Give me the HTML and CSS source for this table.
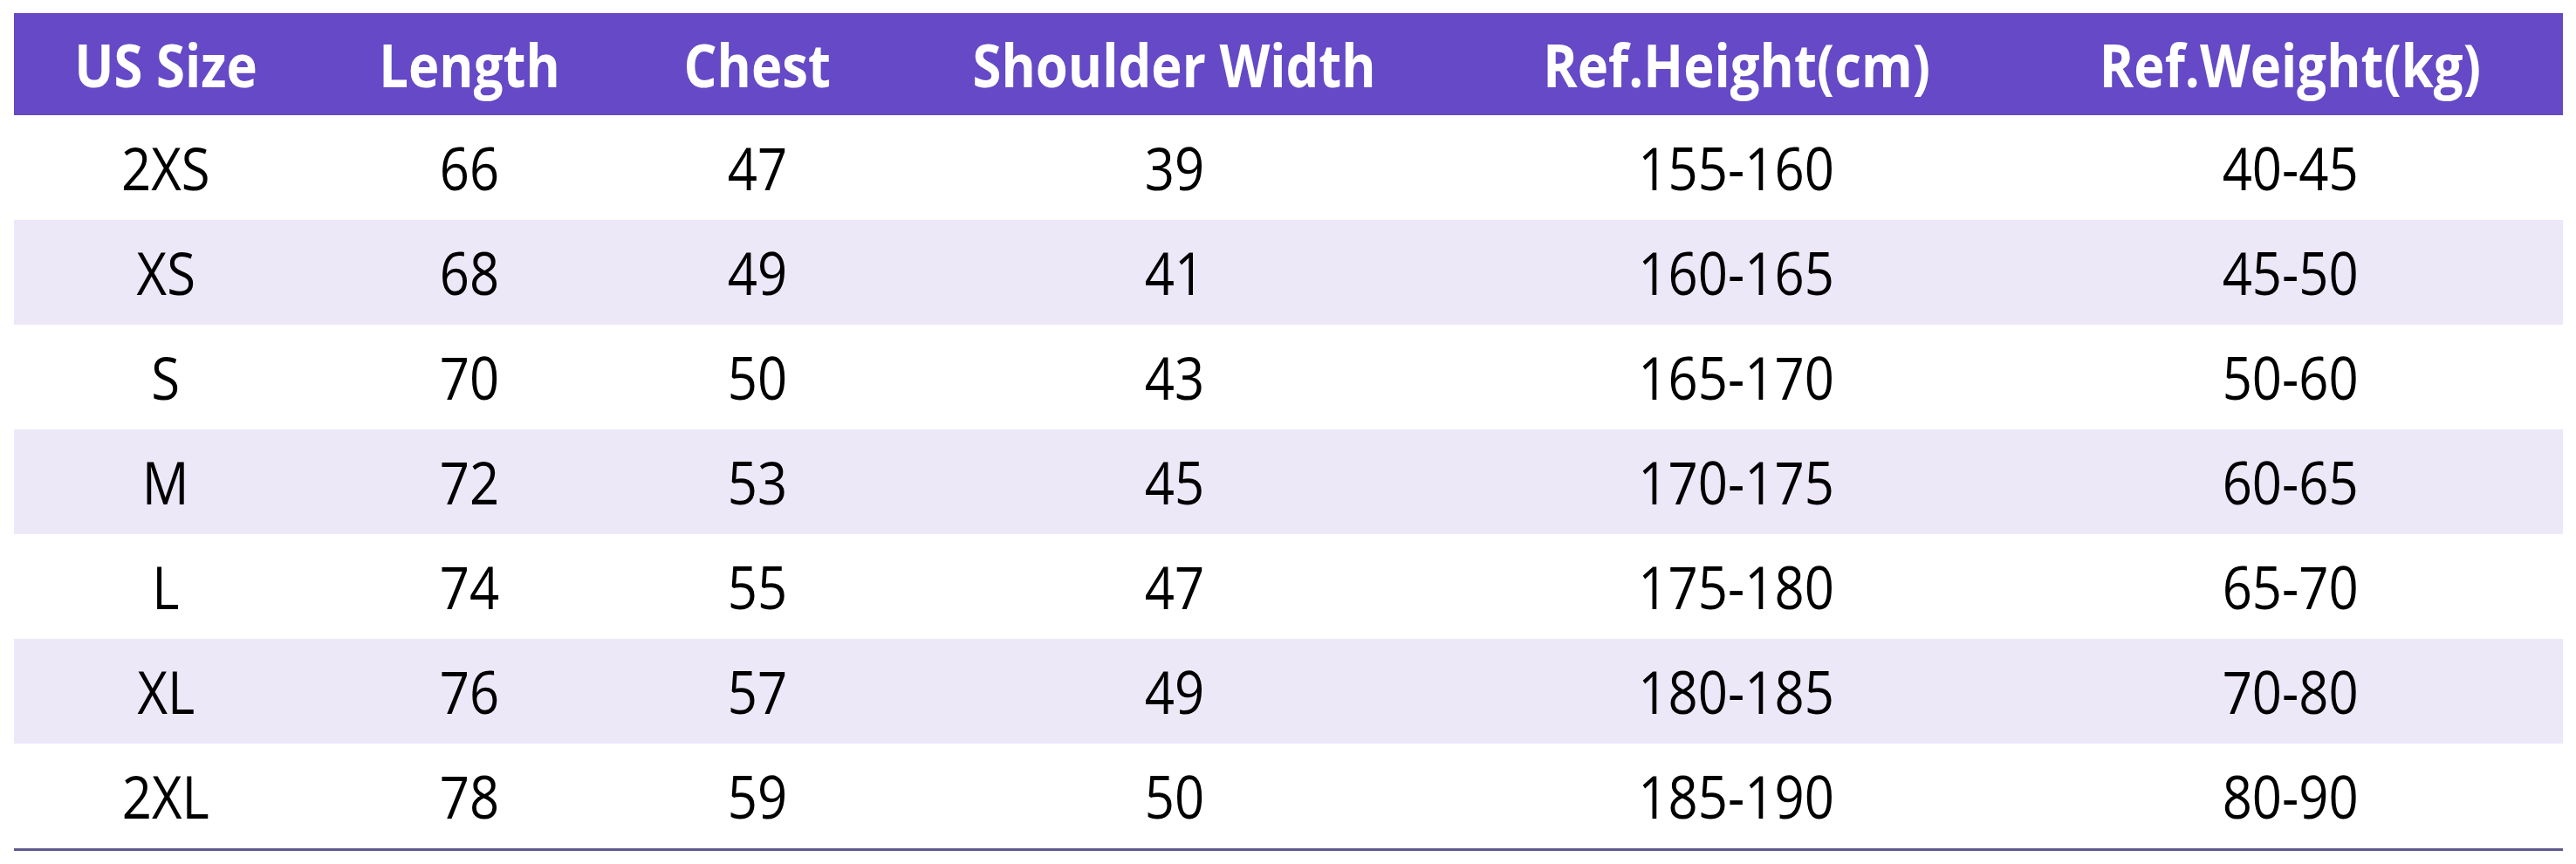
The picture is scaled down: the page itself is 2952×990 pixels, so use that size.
FILE: index.html
```html
<!DOCTYPE html>
<html lang="en">
<head>
<meta charset="utf-8">
<title>Size Chart</title>
<link rel="stylesheet" href="styles.css">
</head>
<body>
<table class="size-table">
  <colgroup>
    <col class="c1"><col class="c2"><col class="c3"><col class="c4"><col class="c5"><col class="c6">
  </colgroup>
  <thead>
    <tr>
      <th><span class="t">US Size</span></th>
      <th><span class="t">Length</span></th>
      <th><span class="t">Chest</span></th>
      <th><span class="t">Shoulder Width</span></th>
      <th><span class="t">Ref.Height(cm)</span></th>
      <th><span class="t">Ref.Weight(kg)</span></th>
    </tr>
  </thead>
  <tbody>
    <tr><td><span class="t">2XS</span></td><td><span class="t">66</span></td><td><span class="t">47</span></td><td><span class="t">39</span></td><td><span class="t">155-160</span></td><td><span class="t">40-45</span></td></tr>
    <tr class="alt"><td><span class="t">XS</span></td><td><span class="t">68</span></td><td><span class="t">49</span></td><td><span class="t">41</span></td><td><span class="t">160-165</span></td><td><span class="t">45-50</span></td></tr>
    <tr><td><span class="t">S</span></td><td><span class="t">70</span></td><td><span class="t">50</span></td><td><span class="t">43</span></td><td><span class="t">165-170</span></td><td><span class="t">50-60</span></td></tr>
    <tr class="alt"><td><span class="t">M</span></td><td><span class="t">72</span></td><td><span class="t">53</span></td><td><span class="t">45</span></td><td><span class="t">170-175</span></td><td><span class="t">60-65</span></td></tr>
    <tr><td><span class="t">L</span></td><td><span class="t">74</span></td><td><span class="t">55</span></td><td><span class="t">47</span></td><td><span class="t">175-180</span></td><td><span class="t">65-70</span></td></tr>
    <tr class="alt"><td><span class="t">XL</span></td><td><span class="t">76</span></td><td><span class="t">57</span></td><td><span class="t">49</span></td><td><span class="t">180-185</span></td><td><span class="t">70-80</span></td></tr>
    <tr class="last"><td><span class="t">2XL</span></td><td><span class="t">78</span></td><td><span class="t">59</span></td><td><span class="t">50</span></td><td><span class="t">185-190</span></td><td><span class="t">80-90</span></td></tr>
  </tbody>
</table>
</body>
</html>
```

FILE: styles.css
```css
html, body {
  margin: 0;
  padding: 0;
  background: #ffffff;
}

body {
  padding: 15px 0 0 16px;
  font-family: "Open Sans", "Noto Sans", sans-serif;
}

.size-table {
  border-collapse: collapse;
  table-layout: fixed;
  width: 2921px;
}

.c1 { width: 348px; }
.c2 { width: 348px; }
.c3 { width: 312px; }
.c4 { width: 644px; }
.c5 { width: 644px; }
.c6 { width: 625px; }

.size-table th,
.size-table td {
  padding: 0;
  text-align: center;
  vertical-align: middle;
  white-space: nowrap;
}

.size-table th {
  height: 117px;
  background: #6549c6;
  color: #ffffff;
  font-weight: 700;
  font-size: 68px;
  line-height: 1;
}

.size-table td {
  height: 120px;
  color: #000000;
  font-weight: 400;
  font-size: 68px;
  line-height: 1;
}

.size-table tr.alt td {
  background: #ece8f8;
}

.size-table tr.last td {
  border-bottom: 3px solid #5e5a8e;
}

.t {
  display: inline-block;
  transform: scaleX(0.88);
  transform-origin: center;
}
```
